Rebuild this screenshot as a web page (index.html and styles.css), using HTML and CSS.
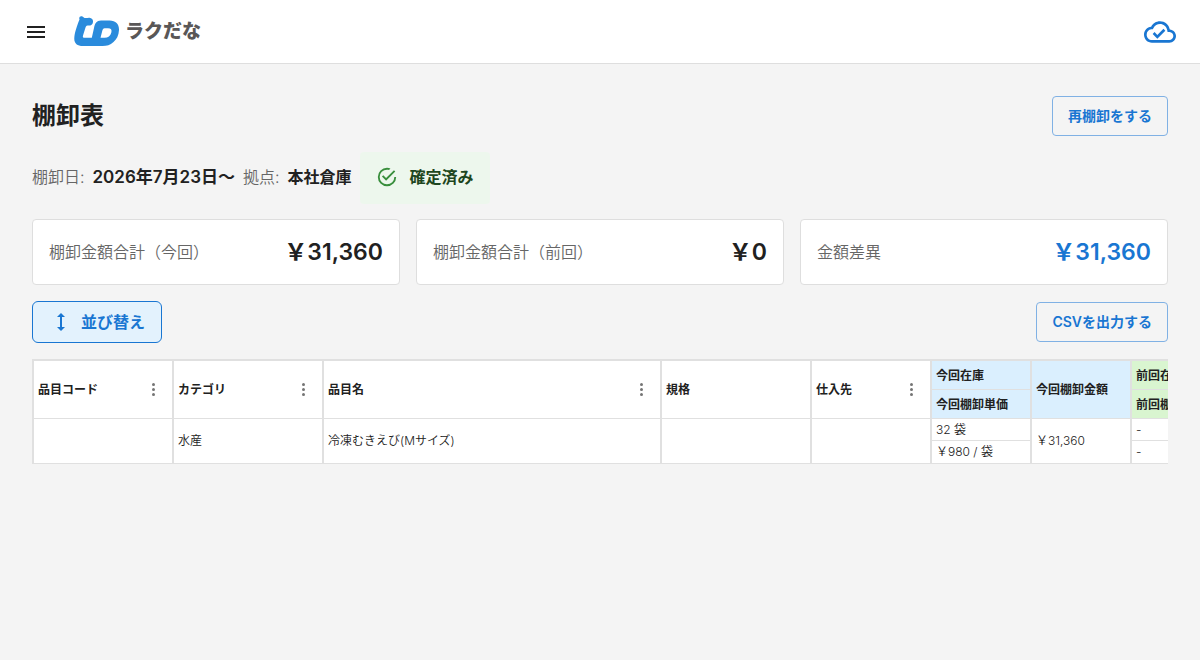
FILE: index.html
```html
<!DOCTYPE html>
<html lang="ja">
<head>
  <meta charset="UTF-8" />
  <meta name="viewport" content="width=device-width, initial-scale=1.0" />
  <title>棚卸表 | ラクだな</title>
  <link rel="stylesheet" href="styles.css">
</head>
<body>
  <header class="app-header">
    <button class="icon-button" type="button" aria-label="メニュー">
      <svg width="24" height="24" viewBox="0 0 24 24" fill="currentColor"><path d="M3 18h18v-2H3zm0-5h18v-2H3zm0-7v2h18V6z"/></svg>
    </button>
    <a class="logo" href="#">
      <svg width="46" height="31" viewBox="0 0 46 31">
        <path fill="#2a8bdc" d="M5.500 3.500 C4.500 1 6.500 -0.500 8.500 0.500 L10.500 2 C12 2.300 13.500 1.600 15.500 1.700 C18 1.900 19.300 3.800 19 6 C18.700 8.600 17 9.600 14.800 9.600 C13 9.600 12 9.800 11.500 11.500 L9 19.500 C8.600 21 9 21.800 10.500 21.800 H17.800 L20 12 C21 7.500 22.500 4.600 27 4.600 H35.500 C42 4.600 45.200 8.500 45 14 C44.800 19.500 42.500 23.500 39.500 26 C36 29 33 30 28.500 30 H9 C3 30 0 27 0.300 22 C0.500 17 3 9.500 5.500 3.500 Z"/>
        <path fill="#fff" d="M30.500 12.300 H34 C37 12.300 38 13.800 37.400 16.200 C36.500 20 34 21.800 30.500 21.800 H26.500 L28.500 14 Q29 12.300 30.500 12.300 Z"/>
      </svg>
      <span class="logo-text">ラクだな</span>
    </a>
    <svg class="cloud-icon" width="32" height="32" viewBox="0 0 24 24" fill="currentColor"><path d="M19.350 10.040C18.670 6.590 15.640 4 12 4 9.110 4 6.600 5.640 5.350 8.040 2.340 8.360 0 10.910 0 14c0 3.310 2.690 6 6 6h13c2.760 0 5-2.240 5-5 0-2.640-2.050-4.780-4.650-4.960M19 18H6c-2.210 0-4-1.790-4-4 0-2.050 1.530-3.760 3.560-3.970l1.070-.11.500-.95C8.080 7.140 9.940 6 12 6c2.620 0 4.880 1.860 5.390 4.430l.3 1.500 1.530.11c1.560.1 2.780 1.410 2.780 2.960 0 1.650-1.350 3-3 3m-9-3.820-2.090-2.090L6.500 13.500 10 17l6.010-6.010-1.410-1.410z"/></svg>
  </header>

  <main class="page">
    <div class="bar">
      <h1>棚卸表</h1>
      <button class="outlined-button" type="button">再棚卸をする</button>
    </div>

    <div class="meta">
      <span>棚卸日:</span>
      <strong class="date">2026年7月23日〜</strong>
      <span>拠点:</span>
      <strong>本社倉庫</strong>
      <div class="status">
        <svg width="22" height="22" viewBox="0 0 24 24" fill="currentColor"><path d="M20 12a8 8 0 1 1-8-8c.76 0 1.500.11 2.200.31l1.570-1.570A9.820 9.820 0 0 0 12 2a10 10 0 1 0 10 10M7.910 10.080 6.500 11.500 11 16 21 6l-1.410-1.420L11 13.170z"/></svg>
        <span>確定済み</span>
      </div>
    </div>

    <section class="cards">
      <div class="card">
        <span class="card-label">棚卸金額合計（今回）</span>
        <span class="card-value">&#xFFE5;31,360</span>
      </div>
      <div class="card">
        <span class="card-label">棚卸金額合計（前回）</span>
        <span class="card-value">&#xFFE5;0</span>
      </div>
      <div class="card">
        <span class="card-label">金額差異</span>
        <span class="card-value diff">&#xFFE5;31,360</span>
      </div>
    </section>

    <div class="bar tools">
      <button class="sort-button" type="button">
        <svg width="24" height="24" viewBox="0 0 24 24" fill="currentColor"><path d="M13 6.990h3L12 3 8 6.990h3v10.020H8L12 21l4-3.990h-3z"/></svg>
        <span>並び替え</span>
      </button>
      <button class="outlined-button" type="button">CSVを出力する</button>
    </div>

    <div class="table-scroll">
      <table>
        <colgroup>
          <col class="col-code">
          <col class="col-wide">
          <col class="col-name">
          <col class="col-wide">
          <col class="col-supplier">
          <col class="col-stock">
          <col class="col-stock">
          <col class="col-stock">
        </colgroup>
        <thead>
          <tr>
            <th rowspan="2"><div class="head-cell">品目コード<button type="button" class="menu-button" aria-label="品目コードのメニュー"><i></i><i></i><i></i></button></div></th>
            <th rowspan="2"><div class="head-cell">カテゴリ<button type="button" class="menu-button" aria-label="カテゴリのメニュー"><i></i><i></i><i></i></button></div></th>
            <th rowspan="2"><div class="head-cell">品目名<button type="button" class="menu-button" aria-label="品目名のメニュー"><i></i><i></i><i></i></button></div></th>
            <th rowspan="2">規格</th>
            <th rowspan="2"><div class="head-cell">仕入先<button type="button" class="menu-button" aria-label="仕入先のメニュー"><i></i><i></i><i></i></button></div></th>
            <th class="current half">今回在庫</th>
            <th class="current" rowspan="2">今回棚卸金額</th>
            <th class="previous half">前回在庫</th>
          </tr>
          <tr>
            <th class="current half">今回棚卸単価</th>
            <th class="previous half">前回棚卸単価</th>
          </tr>
        </thead>
        <tbody>
          <tr>
            <td rowspan="2"></td>
            <td rowspan="2">水産</td>
            <td rowspan="2">冷凍むきえび(Mサイズ)</td>
            <td rowspan="2"></td>
            <td rowspan="2"></td>
            <td>32 袋</td>
            <td rowspan="2">&#xFFE5;31,360</td>
            <td>-</td>
          </tr>
          <tr>
            <td>&#xFFE5;980 / 袋</td>
            <td>-</td>
          </tr>
        </tbody>
      </table>
    </div>
  </main>
</body>
</html>
```
FILE: styles.css
```css
* {
  box-sizing: border-box;
}

body {
  margin: 0;
  background-color: #f4f4f4;
  color: #212121;
  font-family: Inter, "Noto Sans CJK JP", sans-serif;
  font-size: 16px;
  line-height: 24px;
}

button {
  font-family: inherit;
  cursor: pointer;
}

svg {
  display: block;
  flex: none;
}

.app-header {
  display: flex;
  align-items: center;
  height: 64px;
  padding: 0 24px;
  background-color: #fff;
  border-bottom: 1px solid #dedede;
}

.icon-button {
  padding: 0;
  border: none;
  background: none;
  color: #212121;
}

.logo {
  display: flex;
  align-items: center;
  gap: 5px;
  margin-left: 26px;
  text-decoration: none;
}

.logo-text {
  color: #595757;
  font-size: 19px;
  font-weight: 900;
}

.cloud-icon {
  margin-left: auto;
  color: #1976d2;
}

.page {
  padding: 32px;
}

.bar {
  display: flex;
  align-items: center;
  justify-content: space-between;
}

h1 {
  margin: 0;
  font-size: 24px;
  font-weight: 700;
  line-height: 32px;
}

.outlined-button {
  height: 40px;
  padding: 0 15px 2px;
  border: 1px solid #80b1e4;
  border-radius: 4px;
  background: none;
  color: #1976d2;
  font-size: 14px;
  font-weight: 600;
}

.meta {
  display: flex;
  align-items: center;
  gap: 8px;
  margin-top: 16px;
  color: #666;
  font-weight: 350;
  line-height: 22px;
}

.meta > span,
.meta strong {
  padding-bottom: 2px;
}

.meta strong {
  color: #212121;
  font-weight: 600;
}

.meta .date {
  font-size: 17px;
}

.status {
  display: flex;
  align-items: center;
  gap: 12px;
  height: 52px;
  padding: 0 16px 2px;
  border-radius: 4px;
  background-color: #edf7ed;
  color: #388e3c;
}

.status span {
  color: #1e4620;
  font-weight: 700;
}

.cards {
  display: grid;
  grid-template-columns: repeat(3, 1fr);
  gap: 16px;
  margin-top: 15px;
}

.card {
  display: flex;
  align-items: center;
  justify-content: space-between;
  height: 66px;
  padding: 0 16px;
  border: 1px solid #dedede;
  border-radius: 4px;
  background-color: #fff;
}

.card-label {
  color: #666;
  font-weight: 350;
}

.card-value {
  font-size: 23px;
  font-weight: 600;
}

.diff {
  color: #1976d2;
}

.tools {
  margin-top: 16px;
}

.sort-button {
  display: flex;
  align-items: center;
  gap: 8px;
  height: 42px;
  padding: 0 16px;
  border: 1px solid #1976d2;
  border-radius: 6px;
  background-color: #e3f2fd;
  color: #1976d2;
  font-size: 16px;
  font-weight: 600;
}

.sort-button span {
  padding-bottom: 2px;
}

.table-scroll {
  margin-top: 16px;
  overflow-x: auto;
  scrollbar-width: none;
}

table {
  width: 100%;
  table-layout: fixed;
  border-collapse: separate;
  border-spacing: 0;
  border: solid #e0e0e0;
  border-width: 1px 0 0 1px;
  font-size: 12px;
  line-height: 18px;
}

.col-code {
  width: 140px;
}

.col-wide {
  width: 150px;
}

.col-name {
  width: 338px;
}

.col-supplier {
  width: 120px;
}

.col-stock {
  width: 100px;
}

th,
td {
  padding: 0 4px;
  border: solid #e0e0e0;
  border-width: 0 1px 1px;
  background-color: #fff;
  text-align: left;
  white-space: nowrap;
}

th {
  height: 29px;
  font-weight: 600;
}

.half {
  padding-top: 2px;
}

thead tr:first-child th {
  height: 30px;
  border-top-width: 1px;
}

td {
  height: 23px;
  color: #212121;
  font-weight: 350;
}

tbody tr:first-child td {
  height: 22px;
}

.head-cell {
  display: flex;
  align-items: center;
  justify-content: space-between;
}

.menu-button {
  display: flex;
  flex-direction: column;
  align-items: center;
  gap: 2px;
  width: 30px;
  padding: 0;
  border: none;
  background: none;
}

.menu-button i {
  width: 3px;
  height: 3px;
  border-radius: 50%;
  background-color: #757575;
}

.current {
  background-color: #daeffe;
}

.previous {
  background-color: #d9f5d0;
}
```
